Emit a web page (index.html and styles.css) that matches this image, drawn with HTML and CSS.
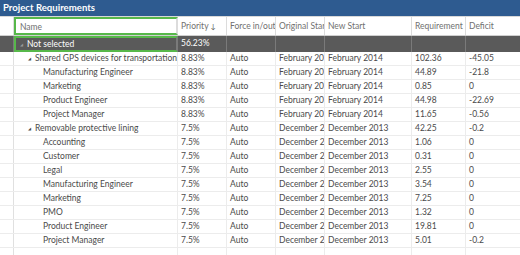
FILE: index.html
```html
<!DOCTYPE html>
<html>
<head>
<meta charset="utf-8">
<link rel="stylesheet" href="styles.css">
</head>
<body>
<div class="panel">
  <div class="title">Project Requirements</div>
  <div class="grid">
    <div class="row head">
      <div class="c gut"></div>
      <div class="c name sel">Name</div>
      <div class="c">Priority <span class="arr">&#8595;</span></div>
      <div class="c">Force in/out</div>
      <div class="c">Original Start</div>
      <div class="c">New Start</div>
      <div class="c">Requirement</div>
      <div class="c">Deficit</div>
    </div>
    <div class="row group0">
      <div class="c gut"></div>
      <div class="c name sel"><span class="tw">&#9698;</span>Not selected</div>
      <div class="c">56.23%</div>
      <div class="c"></div>
      <div class="c"></div>
      <div class="c"></div>
      <div class="c"></div>
      <div class="c"></div>
    </div>
    <div class="row"><div class="c gut"></div><div class="c name l1"><span class="tw">&#9698;</span>Shared GPS devices for transportation</div><div class="c">8.83%</div><div class="c">Auto</div><div class="c">February 2014</div><div class="c">February 2014</div><div class="c">102.36</div><div class="c">-45.05</div></div>
    <div class="row"><div class="c gut"></div><div class="c name l2">Manufacturing Engineer</div><div class="c">8.83%</div><div class="c">Auto</div><div class="c">February 2014</div><div class="c">February 2014</div><div class="c">44.89</div><div class="c">-21.8</div></div>
    <div class="row"><div class="c gut"></div><div class="c name l2">Marketing</div><div class="c">8.83%</div><div class="c">Auto</div><div class="c">February 2014</div><div class="c">February 2014</div><div class="c">0.85</div><div class="c">0</div></div>
    <div class="row"><div class="c gut"></div><div class="c name l2">Product Engineer</div><div class="c">8.83%</div><div class="c">Auto</div><div class="c">February 2014</div><div class="c">February 2014</div><div class="c">44.98</div><div class="c">-22.69</div></div>
    <div class="row"><div class="c gut"></div><div class="c name l2">Project Manager</div><div class="c">8.83%</div><div class="c">Auto</div><div class="c">February 2014</div><div class="c">February 2014</div><div class="c">11.65</div><div class="c">-0.56</div></div>
    <div class="row"><div class="c gut"></div><div class="c name l1"><span class="tw">&#9698;</span>Removable protective lining</div><div class="c">7.5%</div><div class="c">Auto</div><div class="c">December 2013</div><div class="c">December 2013</div><div class="c">42.25</div><div class="c">-0.2</div></div>
    <div class="row"><div class="c gut"></div><div class="c name l2">Accounting</div><div class="c">7.5%</div><div class="c">Auto</div><div class="c">December 2013</div><div class="c">December 2013</div><div class="c">1.06</div><div class="c">0</div></div>
    <div class="row"><div class="c gut"></div><div class="c name l2">Customer</div><div class="c">7.5%</div><div class="c">Auto</div><div class="c">December 2013</div><div class="c">December 2013</div><div class="c">0.31</div><div class="c">0</div></div>
    <div class="row"><div class="c gut"></div><div class="c name l2">Legal</div><div class="c">7.5%</div><div class="c">Auto</div><div class="c">December 2013</div><div class="c">December 2013</div><div class="c">2.55</div><div class="c">0</div></div>
    <div class="row"><div class="c gut"></div><div class="c name l2">Manufacturing Engineer</div><div class="c">7.5%</div><div class="c">Auto</div><div class="c">December 2013</div><div class="c">December 2013</div><div class="c">3.54</div><div class="c">0</div></div>
    <div class="row"><div class="c gut"></div><div class="c name l2">Marketing</div><div class="c">7.5%</div><div class="c">Auto</div><div class="c">December 2013</div><div class="c">December 2013</div><div class="c">7.25</div><div class="c">0</div></div>
    <div class="row"><div class="c gut"></div><div class="c name l2">PMO</div><div class="c">7.5%</div><div class="c">Auto</div><div class="c">December 2013</div><div class="c">December 2013</div><div class="c">1.32</div><div class="c">0</div></div>
    <div class="row"><div class="c gut"></div><div class="c name l2">Product Engineer</div><div class="c">7.5%</div><div class="c">Auto</div><div class="c">December 2013</div><div class="c">December 2013</div><div class="c">19.81</div><div class="c">0</div></div>
    <div class="row"><div class="c gut"></div><div class="c name l2">Project Manager</div><div class="c">7.5%</div><div class="c">Auto</div><div class="c">December 2013</div><div class="c">December 2013</div><div class="c">5.01</div><div class="c">-0.2</div></div>
    <div class="row"><div class="c gut"></div><div class="c name"></div><div class="c"></div><div class="c"></div><div class="c"></div><div class="c"></div><div class="c"></div><div class="c"></div></div>
  </div>
</div>
</body>
</html>
```

FILE: styles.css
```css
html, body {
  margin: 0;
  padding: 0;
  background: #ffffff;
}
.panel {
  width: 520px;
  height: 255px;
  overflow: hidden;
  font-family: "Lato", "Open Sans", sans-serif;
  font-size: 8.5px;
  color: #4a4a4a;
}
.title {
  height: 16px;
  line-height: 15px;
  background: #2e5b90;
  color: #ffffff;
  font-weight: bold;
  font-size: 9.6px;
  padding-left: 3px;
  box-sizing: border-box;
}
.row {
  display: grid;
  grid-template-columns: 14px 164px 49px 49px 49px 87px 54px 54px;
  height: 14px;
  border-bottom: 1px solid #ececec;
  box-sizing: border-box;
}
.c {
  border-right: 1px solid #ececec;
  box-sizing: border-box;
  padding-left: 3px;
  line-height: 13px;
  white-space: nowrap;
  overflow: hidden;
}
.c:last-child {
  border-right: none;
}
.gut {
  padding: 0;
  border-right: 1px solid #e0e0e0;
}
.head {
  height: 20px;
  border-top: 1px solid #d8d8d8;
  border-bottom: 1px solid #cfcfcf;
  color: #707070;
}
.head .c {
  line-height: 18px;
  border-right-color: #dcdcdc;
}
.arr {
  font-size: 7px;
  color: #555;
}
.group0 {
  height: 16px;
  background: #5a5a5a;
  color: #ffffff;
  border-bottom: none;
}
.group0 .c {
  line-height: 15px;
  border-right-color: #7a7a7a;
}
.sel {
  border: 2px solid #57b84a;
  padding-left: 4px;
}
.head .sel {
  line-height: 16px;
}
.group0 .sel {
  line-height: 12px;
}
.tw {
  display: inline-block;
  font-size: 4px;
  width: 7px;
  vertical-align: 1px;
}
.group0 .tw {
  color: #9a9a9a;
}
.l1 {
  padding-left: 14px;
}
.l2 {
  padding-left: 29px;
}
```
